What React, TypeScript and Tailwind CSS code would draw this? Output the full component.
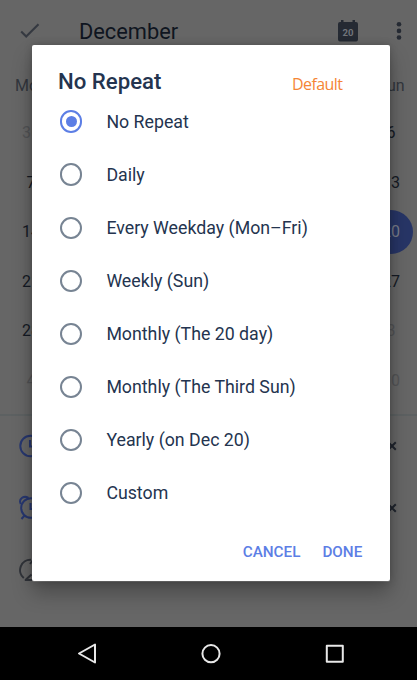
import React from "react";

const weekdays = ["Mon", "Tue", "Wed", "Thu", "Fri", "Sat", "Sun"];
const days = [
  30, 1, 2, 3, 4, 5, 6, 7, 8, 9, 10, 11, 12, 13, 14, 15, 16, 17, 18, 19, 20, 21,
  22, 23, 24, 25, 26, 27, 28, 29, 30, 31, 1, 2, 3, 4, 5, 6, 7, 8, 9, 10,
];
const options = [
  "No Repeat",
  "Daily",
  "Every Weekday (Mon–Fri)",
  "Weekly (Sun)",
  "Monthly (The 20 day)",
  "Monthly (The Third Sun)",
  "Yearly (on Dec 20)",
  "Custom",
];

function dayClass(i: number) {
  if (i === 20) return "bg-[#273566] text-[#777b88]";
  if (i === 0 || i > 31) return "text-[#535456]";
  return "text-[#151a24]";
}

function CloseIcon() {
  return (
    <svg width="10" height="10" viewBox="0 0 10 10" fill="none" stroke="#20252e" strokeWidth="2">
      <path d="M1.200 1.200l7.600 7.600M8.800 1.200l-7.600 7.600" />
    </svg>
  );
}

function Calendar() {
  return (
    <div className="flex h-[627px] flex-col overflow-hidden bg-[#666666]">
      <header className="flex h-[62px] shrink-0 items-center pl-[20px] pr-[15px]">
        <svg width="20" height="16" viewBox="0 0 20 16" fill="none" stroke="#353941" strokeWidth="2.1">
          <path d="M1.2 8.5l5 5L18.5 1.3" />
        </svg>
        <h1 className="ml-[39px] mt-px text-[21.800px] leading-[28px] text-[#0f1520]">December</h1>
        <svg className="ml-auto" width="20" height="22" viewBox="0 0 20 22">
          <path d="M3 0h2.500v2h9V0H17v2h1a2 2 0 0 1 2 2v15.500a2 2 0 0 1-2 2H2a2 2 0 0 1-2-2V4a2 2 0 0 1 2-2h1z" fill="#252a33" />
          <text x="10" y="16.200" textAnchor="middle" fontSize="9.600" fontWeight="700" fill="#70747a" fontFamily="Roboto, sans-serif">20</text>
        </svg>
        <svg className="ml-[38px]" width="6" height="20" viewBox="0 0 6 20" fill="#252a33">
          <circle cx="3" cy="3.300" r="2.300" />
          <circle cx="3" cy="9.900" r="2.300" />
          <circle cx="3" cy="16.500" r="2.300" />
        </svg>
      </header>
      <div className="ml-px grid h-[48px] w-[420px] shrink-0 grid-cols-7 items-center text-center text-[16px] text-[#32363d]">
        {weekdays.map((d) => <span key={d}>{d}</span>)}
      </div>
      <div className="-mt-[2px] ml-px grid h-[297px] w-[420px] shrink-0 grid-cols-7 grid-rows-6 place-items-center text-[16px]">
        {days.map((d, i) => (
          <span key={i} className={`flex size-[44px] items-center justify-center rounded-full pt-px ${dayClass(i)}`}>{d}</span>
        ))}
      </div>
      <div className="mt-[9px] h-[2px] shrink-0 bg-[#5d6162]" />
      <div className="flex flex-col pl-[19px] pr-[20px]">
        <div className="flex h-[60px] items-center justify-between">
          <svg width="24" height="24" viewBox="0 0 24 24" fill="none" stroke="#27376f" strokeWidth="2">
            <circle cx="11.500" cy="12" r="10.200" />
            <path d="M11 6v6.500h5" />
          </svg>
          <CloseIcon />
        </div>
        <div className="flex h-[63px] items-center justify-between">
          <svg width="26" height="26" viewBox="0 0 26 26" fill="none" stroke="#27376f" strokeWidth="2">
            <circle cx="12" cy="13" r="9.800" />
            <path d="M11.500 8v6h4M5.500 20.500L2.500 24M18.500 20.500l3 3.500M1.800 9C-.8 4 4.500.2 9.500 2.800M22.200 9C24.800 4 19.500.2 14.500 2.800" />
          </svg>
          <CloseIcon />
        </div>
        <div className="flex h-[62px] items-center">
          <svg width="24" height="24" viewBox="0 0 24 24" fill="none" stroke="#303339" strokeWidth="2">
            <path d="M4.800 20A10.300 10.300 0 0 1 12 1.800M18 4a10 10 0 0 1-1 17" />
            <path d="M5.800 22h8M7 21.500l5.500-5M11 6l3-4" />
          </svg>
        </div>
      </div>
    </div>
  );
}

function RepeatDialog() {
  return (
    <section role="dialog" className="absolute left-[31.700px] top-[45px] flex h-[536px] w-[358.600px] flex-col rounded-[2px] bg-white text-[#24344f] shadow-[0_12px_20px_rgba(0,0,0,0.28),0_0_8px_rgba(0,0,0,0.2),0_1px_0_#888]">
      <div className="flex h-[50px] shrink-0 items-start justify-between pl-[26.300px] pr-[48px]">
        <h2 className="mt-[21px] text-[22.200px] font-medium leading-[30px]">No Repeat</h2>
        <span className="mt-[27px] font-['Open_Sans',sans-serif] text-[16px] leading-[24px] tracking-[-0.6px] text-[#f58535]">Default</span>
      </div>
      <div className="flex shrink-0 flex-col">
        {options.map((option, i) => (
          <label key={option} className="flex h-[53.100px] items-center pl-[28.300px]">
            <span className={`flex size-[22.400px] shrink-0 items-center justify-center rounded-full border-2 ${i === 0 ? "border-[#5c7ee5]" : "border-[#778493]"}`}>
              {i === 0 && <span className="size-[11px] rounded-full bg-[#5c7ee5]" />}
            </span>
            <span className="ml-[24px] whitespace-nowrap text-[17.750px] leading-[24px]">{option}</span>
          </label>
        ))}
      </div>
      <div className="mt-[22px] flex justify-end gap-[22px] pr-[28px] text-[15.250px] font-medium leading-[20px] text-[#5c7ee5]">
        <button>CANCEL</button>
        <button>DONE</button>
      </div>
    </section>
  );
}

export default function App() {
  return (
    <main className="relative h-[680px] w-[417px] overflow-hidden font-['Roboto',sans-serif]">
      <Calendar />
      <RepeatDialog />
      <nav className="flex h-[53px] items-center bg-black pl-[77px] text-[#e8e8e8]">
        <svg width="20" height="22" viewBox="0 0 20 22" fill="none" stroke="currentColor" strokeWidth="2" strokeLinejoin="round">
          <path d="M18 1.500v18L2 10.500z" />
        </svg>
        <svg className="ml-[104px]" width="20" height="20" viewBox="0 0 20 20" fill="none" stroke="currentColor" strokeWidth="2">
          <circle cx="10" cy="9.700" r="8.600" />
        </svg>
        <svg className="ml-[104px]" width="20" height="20" viewBox="0 0 20 20" fill="none" stroke="currentColor" strokeWidth="2" strokeLinejoin="round">
          <path d="M1.800 1.800h16v16h-16z" />
        </svg>
      </nav>
    </main>
  );
}
